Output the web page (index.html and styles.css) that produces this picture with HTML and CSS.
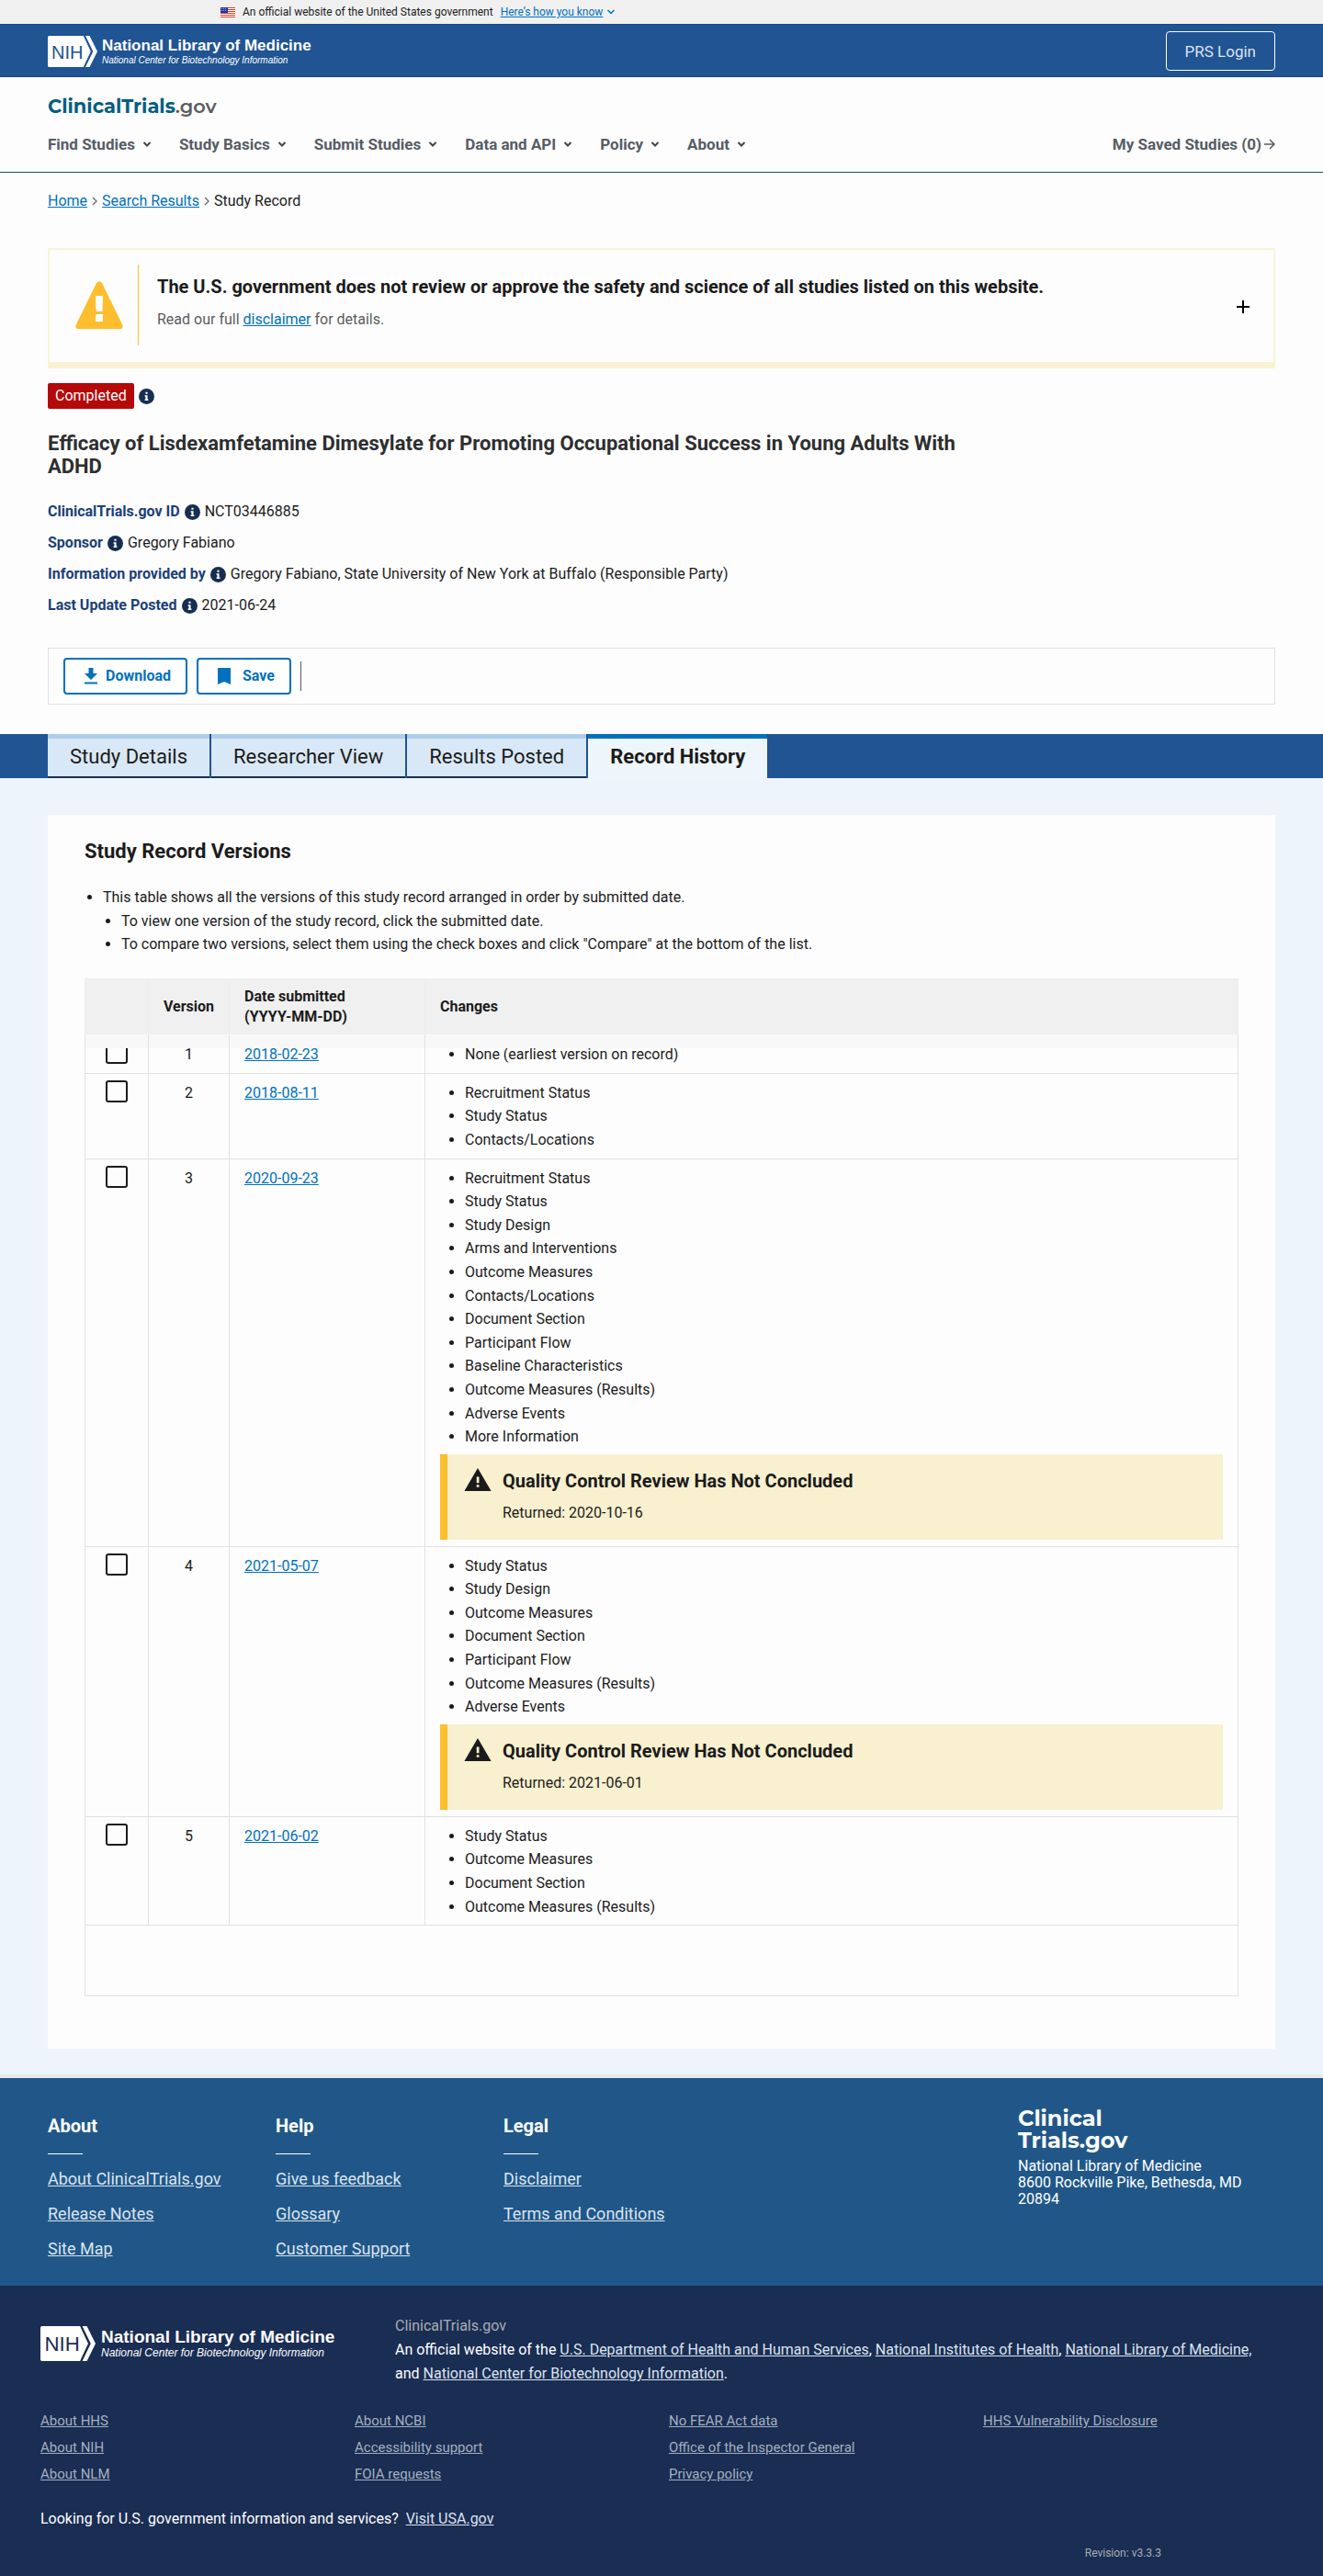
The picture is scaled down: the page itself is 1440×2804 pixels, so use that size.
FILE: index.html
```html
<!DOCTYPE html>
<html lang="en">
<head>
<meta charset="utf-8">
<meta name="viewport" content="width=device-width, initial-scale=1">
<title>Record History | ClinicalTrials.gov</title>
<link rel="stylesheet" href="styles.css">
</head>
<body>
<svg class="sprite" aria-hidden="true">
  <symbol id="chevron" viewBox="0 0 10 8"><path d="M1.500 2l3.500 3.500L8.500 2" fill="none" stroke="currentColor" stroke-width="2"/></symbol>
  <symbol id="info" viewBox="0 0 16 16"><circle cx="8" cy="8" r="8" fill="#162e51"/><path d="M7 3.500h2v2H7zM6.200 6.800H9v4h.8v1.500H6.200v-1.500H7V8.300h-.8z" fill="#fff"/></symbol>
  <symbol id="alert" viewBox="0 0 28 24"><path d="M14 0l14 24H0z" fill="#1b1b1b"/><path d="M12.800 9h2.600v6.500h-2.600zM12.800 17.500h2.600V20h-2.600z" fill="#f8f0cf"/></symbol>
</svg>

<div class="gov-banner">
  <svg class="flag" viewBox="0 0 16 11" aria-hidden="true"><path fill="#fff" d="M0 0h16v11H0z"/><path stroke="#db3e1f" d="M0 .5h16M0 2.500h16M0 4.500h16M0 6.500h16M0 8.500h16M0 10.500h16"/><path fill="#1e33b1" d="M0 0h8v6H0z"/><path stroke="#a5afe0" stroke-dasharray="1 1" d="M1 1.500h6M1 3.500h6"/></svg>
  <span>An official website of the United States government</span>
  <button type="button" class="gov-toggle"><span>Here’s how you know</span><svg class="chev" viewBox="0 0 10 8" aria-hidden="true"><path d="M1.500 2l3.500 3.500L8.500 2" fill="none" stroke="currentColor" stroke-width="1.500"/></svg></button>
</div>

<div class="nlm-bar">
  <a href="#" class="nlm-logo">
    <svg class="nih" viewBox="0 0 54 34" aria-hidden="true"><path d="M1.500 0H39l8 17-8 17H1.500Q0 34 0 32.500v-31Q0 0 1.500 0z" fill="#fff"/><path d="M41 0h4.500L54 17l-8.500 17H41l8.300-17z" fill="#fff"/><path d="M39.800 0l8 17-8 17" fill="none" stroke="var(--mark)" stroke-width="1.600"/><text x="4" y="24.500" font-size="20" fill="var(--mark)">NIH</text></svg>
    <span class="nlm-text"><span class="nlm-name">National Library of Medicine</span><span class="nlm-sub">National Center for Biotechnology Information</span></span>
  </a>
  <button type="button" class="login">PRS Login</button>
</div>

<header class="site-header">
  <a href="#" class="site-logo">ClinicalTrials<span>.gov</span></a>
  <nav class="main-nav" aria-label="Main">
    <button type="button">Find Studies<svg class="chev" aria-hidden="true"><use href="#chevron"/></svg></button>
    <button type="button">Study Basics<svg class="chev" aria-hidden="true"><use href="#chevron"/></svg></button>
    <button type="button">Submit Studies<svg class="chev" aria-hidden="true"><use href="#chevron"/></svg></button>
    <button type="button">Data and API<svg class="chev" aria-hidden="true"><use href="#chevron"/></svg></button>
    <button type="button">Policy<svg class="chev" aria-hidden="true"><use href="#chevron"/></svg></button>
    <button type="button">About<svg class="chev" aria-hidden="true"><use href="#chevron"/></svg></button>
    <a href="#" class="saved">My Saved Studies (0)<svg viewBox="0 0 12 12" class="arrow" aria-hidden="true"><path d="M0 6h11M6 1l5 5-5 5" fill="none" stroke="currentColor" stroke-width="1.500"/></svg></a>
  </nav>
</header>

<nav class="breadcrumb" aria-label="Breadcrumb">
  <a href="#">Home</a>
  <svg viewBox="0 0 6 10" aria-hidden="true"><path d="M1 1l4 4-4 4" fill="none" stroke="#71767a" stroke-width="1.500"/></svg>
  <a href="#">Search Results</a>
  <svg viewBox="0 0 6 10" aria-hidden="true"><path d="M1 1l4 4-4 4" fill="none" stroke="#71767a" stroke-width="1.500"/></svg>
  <span>Study Record</span>
</nav>

<main>
  <section class="notice">
    <div class="notice-icon"><svg viewBox="0 0 52 52" aria-hidden="true"><path d="M23 2Q26-1.500 29 2l22 45q2 5-3 5H4q-5 0-3-5z" fill="#ffbe2e"/><path d="M22 16h8l-.5 17h-7zM22 36h8v8h-8z" fill="#fff"/></svg></div>
    <div class="notice-text">
      <h2>The U.S. government does not review or approve the safety and science of all studies listed on this website.</h2>
      <p>Read our full <a href="#">disclaimer</a> for details.</p>
    </div>
    <button type="button" class="expand" aria-label="Expand"><svg viewBox="0 0 14 14" aria-hidden="true"><path d="M7 0v14M0 7h14" stroke="#000" stroke-width="2"/></svg></button>
  </section>

  <section class="study-head">
    <div class="status"><span class="badge">Completed</span><svg class="info" aria-hidden="true"><use href="#info"/></svg></div>
    <h1>Efficacy of Lisdexamfetamine Dimesylate for Promoting Occupational Success in Young Adults With ADHD</h1>
    <dl class="meta">
      <div><dt>ClinicalTrials.gov ID</dt><svg class="info" aria-hidden="true"><use href="#info"/></svg><dd>NCT03446885</dd></div>
      <div><dt>Sponsor</dt><svg class="info" aria-hidden="true"><use href="#info"/></svg><dd>Gregory Fabiano</dd></div>
      <div><dt>Information provided by</dt><svg class="info" aria-hidden="true"><use href="#info"/></svg><dd>Gregory Fabiano, State University of New York at Buffalo (Responsible Party)</dd></div>
      <div><dt>Last Update Posted</dt><svg class="info" aria-hidden="true"><use href="#info"/></svg><dd>2021-06-24</dd></div>
    </dl>
    <div class="actions">
      <button type="button"><svg viewBox="0 0 16 18" aria-hidden="true"><path d="M5.500 0h5v6H15l-7 7-7-7h4.500zM1 15.500h14v2H1z" fill="currentColor"/></svg>Download</button>
      <button type="button" class="save"><svg viewBox="0 0 16 18" aria-hidden="true"><path d="M1 0h14v18l-7-3-7 3z" fill="currentColor"/></svg>Save</button>
      <span class="divider"></span>
    </div>
  </section>

  <nav class="tabs" aria-label="Study record views">
    <a href="#">Study Details</a>
    <a href="#">Researcher View</a>
    <a href="#">Results Posted</a>
    <a href="#" class="active" aria-current="page">Record History</a>
  </nav>

  <section class="history">
    <div class="card">
      <h2>Study Record Versions</h2>
      <ul class="help">
        <li>This table shows all the versions of this study record arranged in order by submitted date.
          <ul>
            <li>To view one version of the study record, click the submitted date.</li>
            <li>To compare two versions, select them using the check boxes and click "Compare" at the bottom of the list.</li>
          </ul>
        </li>
      </ul>
      <table class="versions">
        <thead>
          <tr><th class="c-check"></th><th class="c-version">Version</th><th class="c-date">Date submitted<br>(YYYY-MM-DD)</th><th>Changes</th></tr>
        </thead>
        <tbody>
          <tr>
            <td class="check"><input type="checkbox" aria-label="Select version 1"></td><td class="num">1</td><td><a href="#">2018-02-23</a></td>
            <td><ul><li>None (earliest version on record)</li></ul></td>
          </tr>
          <tr>
            <td class="check"><input type="checkbox" aria-label="Select version 2"></td><td class="num">2</td><td><a href="#">2018-08-11</a></td>
            <td><ul><li>Recruitment Status</li><li>Study Status</li><li>Contacts/Locations</li></ul></td>
          </tr>
          <tr>
            <td class="check"><input type="checkbox" aria-label="Select version 3"></td><td class="num">3</td><td><a href="#">2020-09-23</a></td>
            <td>
              <ul><li>Recruitment Status</li><li>Study Status</li><li>Study Design</li><li>Arms and Interventions</li><li>Outcome Measures</li><li>Contacts/Locations</li><li>Document Section</li><li>Participant Flow</li><li>Baseline Characteristics</li><li>Outcome Measures (Results)</li><li>Adverse Events</li><li>More Information</li></ul>
              <div class="qc"><svg aria-hidden="true"><use href="#alert"/></svg><div><h3>Quality Control Review Has Not Concluded</h3><p>Returned: 2020-10-16</p></div></div>
            </td>
          </tr>
          <tr>
            <td class="check"><input type="checkbox" aria-label="Select version 4"></td><td class="num">4</td><td><a href="#">2021-05-07</a></td>
            <td>
              <ul><li>Study Status</li><li>Study Design</li><li>Outcome Measures</li><li>Document Section</li><li>Participant Flow</li><li>Outcome Measures (Results)</li><li>Adverse Events</li></ul>
              <div class="qc"><svg aria-hidden="true"><use href="#alert"/></svg><div><h3>Quality Control Review Has Not Concluded</h3><p>Returned: 2021-06-01</p></div></div>
            </td>
          </tr>
          <tr>
            <td class="check"><input type="checkbox" aria-label="Select version 5"></td><td class="num">5</td><td><a href="#">2021-06-02</a></td>
            <td><ul><li>Study Status</li><li>Outcome Measures</li><li>Document Section</li><li>Outcome Measures (Results)</li></ul></td>
          </tr>
        </tbody>
        <tfoot><tr><td colspan="4"></td></tr></tfoot>
      </table>
    </div>
  </section>
</main>

<footer>
  <div class="foot-nav">
    <div class="foot-col"><h3>About</h3><a href="#">About ClinicalTrials.gov</a><a href="#">Release Notes</a><a href="#">Site Map</a></div>
    <div class="foot-col"><h3>Help</h3><a href="#">Give us feedback</a><a href="#">Glossary</a><a href="#">Customer Support</a></div>
    <div class="foot-col"><h3>Legal</h3><a href="#">Disclaimer</a><a href="#">Terms and Conditions</a></div>
    <div class="foot-org">
      <div class="foot-logo">Clinical<br>Trials.gov</div>
      <address>National Library of Medicine<br>8600 Rockville Pike, Bethesda, MD 20894</address>
    </div>
  </div>
  <div class="foot-gov">
    <div class="foot-id">
      <a href="#" class="nlm-logo large">
        <svg class="nih" viewBox="0 0 54 34" aria-hidden="true"><path d="M1.500 0H39l8 17-8 17H1.500Q0 34 0 32.500v-31Q0 0 1.500 0z" fill="#fff"/><path d="M41 0h4.500L54 17l-8.500 17H41l8.300-17z" fill="#fff"/><path d="M39.800 0l8 17-8 17" fill="none" stroke="var(--mark)" stroke-width="1.600"/><text x="4" y="24.500" font-size="20" fill="var(--mark)">NIH</text></svg>
        <span class="nlm-text"><span class="nlm-name">National Library of Medicine</span><span class="nlm-sub">National Center for Biotechnology Information</span></span>
      </a>
      <div class="foot-about">
        <p class="muted">ClinicalTrials.gov</p>
        <p>An official website of the <a href="#">U.S. Department of Health and Human Services</a>, <a href="#">National Institutes of Health</a>, <a href="#">National Library of Medicine,</a> and <a href="#">National Center for Biotechnology Information</a>.</p>
      </div>
    </div>
    <div class="foot-links">
      <ul><li><a href="#">About HHS</a></li><li><a href="#">About NIH</a></li><li><a href="#">About NLM</a></li></ul>
      <ul><li><a href="#">About NCBI</a></li><li><a href="#">Accessibility support</a></li><li><a href="#">FOIA requests</a></li></ul>
      <ul><li><a href="#">No FEAR Act data</a></li><li><a href="#">Office of the Inspector General</a></li><li><a href="#">Privacy policy</a></li></ul>
      <ul><li><a href="#">HHS Vulnerability Disclosure</a></li></ul>
    </div>
    <p class="usa">Looking for U.S. government information and services?&nbsp; <a href="#">Visit USA.gov</a></p>
    <p class="revision">Revision: v3.3.3</p>
  </div>
</footer>
</body>
</html>
```
FILE: styles.css
```css
* { box-sizing: border-box; }
body { margin: 0; background: #fdfdfd; color: #1b1b1b; font-family: Roboto, sans-serif; font-size: 16px; line-height: 24px; }
h1, h2, h3, p, ul, dl, dd { margin: 0; padding: 0; }
button { font: inherit; color: inherit; background: none; border: 0; padding: 0; cursor: pointer; }
a { color: #0071bc; }
svg { display: block; flex: none; }
.sprite { position: absolute; width: 0; height: 0; }
.chev { width: 10px; height: 8px; }

/* Government banner */
.gov-banner { display: flex; align-items: center; gap: 8px; height: 26px; padding: 0 240px; background: #f0f0f0; font-size: 12px; }
.flag { width: 16px; height: 11px; }
.gov-toggle { display: flex; align-items: center; gap: 4px; color: #0071bc; }
.gov-toggle span { text-decoration: underline; }

/* Library bar */
.nlm-bar { --mark: #205493; display: flex; justify-content: space-between; align-items: center; padding: 7px 52px 6px; background: #205493; border-top: 1px solid #1a4480; border-bottom: 1px solid #1a4480; }
.nlm-logo { display: flex; align-items: center; gap: 5px; color: #fff; text-decoration: none; font-family: "Liberation Sans", Arial, sans-serif; }
.nih { width: 54px; height: 34px; }
.nlm-text { display: flex; flex-direction: column; }
.nlm-name { font-size: 17px; font-weight: 700; line-height: 19px; }
.nlm-sub { font-size: 10px; font-style: italic; line-height: 13px; }
.login { height: 43px; padding: 0 20px; border: 1px solid #fff; border-radius: 4px; color: #dce4ef; font-size: 17px; }

/* Site header */
.site-header { padding: 18px 52px; border-bottom: 1px solid #1c4a66; }
.site-logo { display: block; font-family: Montserrat, "Open Sans", sans-serif; font-size: 21px; font-weight: 700; line-height: 28px; color: #045e7f; text-decoration: none; }
.site-logo span { color: #5c5c5c; font-weight: 600; }
.main-nav { display: flex; align-items: center; gap: 30px; padding-top: 15px; font-size: 17px; font-weight: 700; color: #565c65; }
.main-nav button { display: flex; align-items: center; gap: 8px; }
.main-nav .chev { color: #3d4551; }
.saved { display: flex; align-items: center; gap: 3px; margin-left: auto; color: inherit; text-decoration: none; }
.arrow { width: 12px; height: 12px; }

.breadcrumb { display: flex; align-items: center; gap: 5px; padding: 19px 52px; }
.breadcrumb svg { width: 6px; height: 10px; }

/* Disclaimer notice */
.notice { display: flex; align-items: center; margin: 20px 52px 0; padding: 16px 26px 18px 28px; border: 2px solid #f8f5d5; border-bottom: 7px solid #f8f2d3; }
.notice-icon { padding: 18px 16px 18px 0; border-right: 1px solid #ffbe2e; }
.notice-icon svg { width: 52px; height: 52px; }
.notice-text { flex: 1; padding: 0 0 4px 20px; }
.notice h2 { font-size: 20px; line-height: 24px; }
.notice p { margin-top: 12px; color: #5c5c5c; }
.expand { padding-top: 3px; }
.expand svg { width: 14px; height: 14px; }

/* Study summary */
.study-head { padding: 16px 52px 32px; }
.status { display: flex; align-items: center; gap: 5px; }
.badge { padding: 2px 8px; background: #b50909; color: #fff; border-radius: 2px; }
.info { width: 17px; height: 17px; }
.study-head h1 { max-width: 1000px; margin-top: 25px; font-size: 22px; line-height: 25px; color: #2d2e2f; }
.meta { display: flex; flex-direction: column; gap: 10px; margin-top: 25px; }
.meta div { display: flex; align-items: center; gap: 5px; }
.meta dt { font-weight: 700; color: #1a3f78; }
.actions { display: flex; align-items: center; gap: 10px; margin-top: 34px; padding: 10px 16px; border: 1px solid #dfe1e2; }
.actions button { display: flex; align-items: center; gap: 8px; height: 40px; padding: 0 16px 0 20px; border: 2px solid #0071bc; border-radius: 4px; background: #fff; color: #0071bc; font-weight: 700; }
.actions .save { gap: 12px; }
.actions svg { width: 16px; height: 18px; }
.divider { width: 1px; height: 32px; background: #565c65; }

/* Record tabs */
.tabs { display: flex; gap: 2px; padding: 0 52px; background: #205493; }
.tabs a { padding: 6px 24px 7px; border-top: 5px solid #adcdea; border-bottom: 2px solid #162e51; background: #d9e8f6; color: #1b1b1b; font-size: 22px; line-height: 28px; text-decoration: none; }
.tabs .active { border-top-color: #0071bc; border-bottom-color: #eff6fb; background: #eff6fb; font-weight: 700; }

/* Version history */
.history { padding: 40px 52px 28px; background: #edf4fc; border-bottom: 4px solid #e6e9ec; }
.card { padding: 25px 40px 57px; background: #fdfdfd; }
.card h2 { font-size: 22px; line-height: 30px; }
.card li { line-height: 1.6; }
.help { margin-top: 22px; padding-left: 20px; }
.help ul { padding-left: 20px; list-style: disc; }
.versions { width: 100%; margin-top: 24px; border-collapse: collapse; table-layout: fixed; border: 1px solid #dfe1e2; }
.versions th, .versions td { padding: 8px 16px 7px; border: 1px solid #dfe1e2; text-align: left; }
.versions td { vertical-align: top; line-height: 26px; }
.versions th { position: relative; height: 61px; border-color: #ededed; background: #f0f0f0; line-height: 22px; }
.versions th::after { content: ""; position: absolute; left: 0; right: 0; top: 100%; height: 15px; background: #f8f8f8; z-index: 1; }
.c-check { width: 69px; }
.c-version { width: 88px; }
.c-date { width: 213px; }
.versions .check { padding: 7px 0 0 22px; }
.versions .num { text-align: center; }
.versions ul { padding-left: 27px; }
.check input { appearance: none; display: block; width: 24px; height: 24px; margin: 0; border: 2px solid #1b1b1b; border-radius: 3px; background: #fdfdfd; }
.versions tfoot td { height: 77px; }
.qc { display: flex; gap: 12px; margin-top: 6px; padding: 15px 20px 17px 18px; border-left: 8px solid #ffbe2e; background: #f8f0cf; }
.qc svg { width: 30px; height: 25px; }
.qc h3 { font-size: 20px; line-height: 29px; }
.qc p { margin-top: 8px; line-height: 24px; }

/* Footer */
.foot-nav { display: flex; padding: 32px 52px 28px; background: #205788; color: #fff; }
.foot-col { display: flex; flex-direction: column; align-items: flex-start; gap: 14px; flex: 0 0 248px; padding-top: 8px; }
.foot-col h3 { font-size: 20px; line-height: 24px; }
.foot-col h3::after { content: ""; display: block; width: 38px; height: 1px; margin-top: 18px; margin-bottom: 1px; background: #fff; }
.foot-col a { color: #dce4ef; font-size: 18px; }
.foot-org { width: 280px; margin-left: auto; }
.foot-logo { font-family: Montserrat, "Open Sans", sans-serif; font-size: 24px; font-weight: 700; line-height: 24px; }
address { max-width: 260px; margin-top: 7px; font-style: normal; line-height: 18px; }
.foot-gov { --mark: #1a2d53; padding: 31px 44px 14px; background: #1a2d53; color: #fff; }
.foot-gov a { color: #dce4ef; }
.foot-id { display: flex; align-items: flex-start; }
.foot-id .nlm-logo { flex: 0 0 386px; padding-top: 12px; gap: 6px; color: #fff; }
.large .nih { width: 60px; height: 40px; }
.large .nlm-name { font-size: 19px; line-height: 21px; }
.large .nlm-sub { font-size: 12px; line-height: 15px; }
.foot-about { max-width: 940px; }
.foot-about p { line-height: 26px; }
.foot-about .muted { color: #a9aeb1; }
.foot-links { display: grid; grid-template-columns: repeat(4, 342px); margin-top: 24px; }
.foot-links ul { list-style: none; }
.foot-links li { line-height: 29px; font-size: 15px; }
.foot-links a { color: #a3b0c0; }
.usa { margin-top: 22px; }
.revision { margin-top: 13px; padding-right: 132px; text-align: right; font-size: 12px; color: #a9aeb1; }
```
